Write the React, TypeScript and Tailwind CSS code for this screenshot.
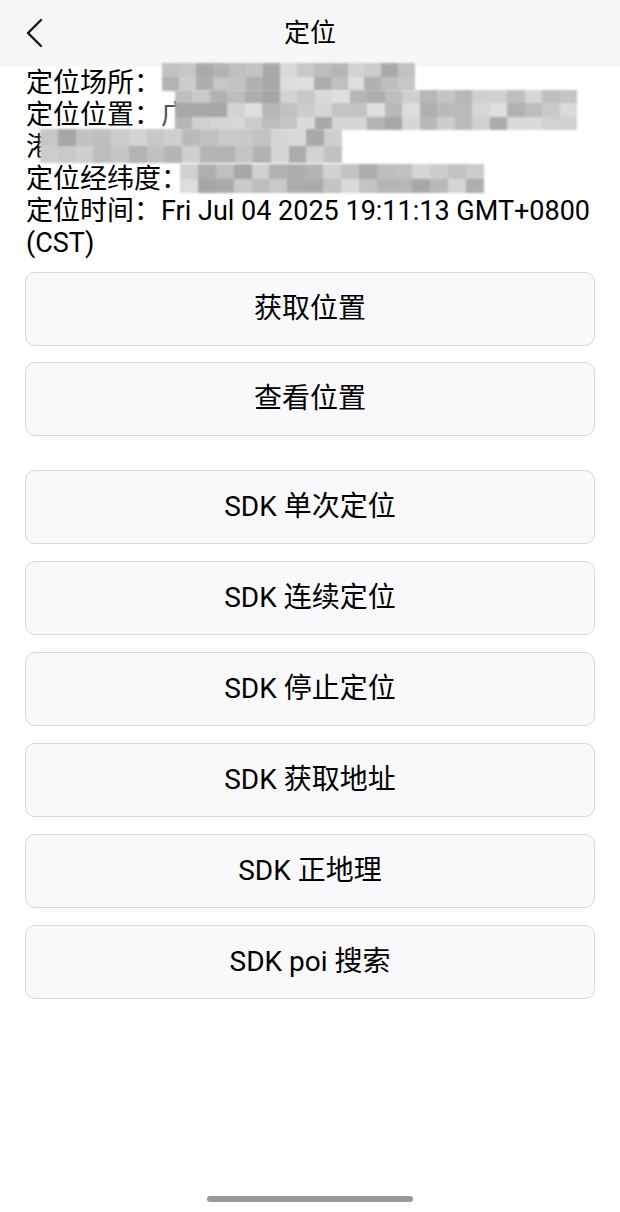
import { type ReactNode } from 'react';

const FONT = 'font-["Roboto","Noto_Sans_CJK_SC",sans-serif]';

/** Blurred mosaic used to hide the private parts of the location info */
function Mosaic({ x, y, w, h, seed }: { x: number; y: number; w: number; h: number; seed: number }) {
  const size = 18;
  const cols = Math.ceil(w / size);
  const rows = Math.ceil(h / size);
  const cells: ReactNode[] = [];
  let s = seed;
  for (let r = 0; r < rows; r++) {
    for (let c = 0; c < cols; c++) {
      s = (s * 9301 + 49297) % 233280;
      const v = 165 + Math.floor((s / 233280) * 60);
      cells.push(
        <div key={`${r}-${c}`} style={{ background: `rgb(${v},${v},${v})` }} />
      );
    }
  }
  return (
    <div
      className="absolute blur-[1px] grid rounded-[6px]"
      style={{
        left: x,
        top: y,
        width: w,
        height: h,
        gridTemplateColumns: `repeat(${cols}, 1fr)`,
        gridTemplateRows: `repeat(${rows}, 1fr)`,
      }}
    >
      {cells}
    </div>
  );
}

function ActionButton({ label }: { label: string }) {
  return (
    <button className="w-full h-[74px] rounded-[10px] border border-[#d8d8d8] bg-[#f9f8fa] text-[28px] text-black flex items-center justify-center">
      {label}
    </button>
  );
}

export default function App() {
  return (
    <div className={`w-[620px] h-[1212px] bg-white relative overflow-hidden text-black ${FONT}`}>
      {/* header */}
      <div className="h-[67px] bg-[#f7f7f9] flex items-center justify-center relative">
        <svg
          className="absolute left-[24px] top-[18px]"
          width="22"
          height="30"
          viewBox="0 0 22 30"
          fill="none"
          stroke="#111"
          strokeWidth="2.4"
          strokeLinecap="round"
          strokeLinejoin="round"
        >
          <path d="M17 2 L4 15 L17 28" />
        </svg>
        <span className="text-[26px]">定位</span>
      </div>

      {/* location info */}
      <div className="relative px-[26px] text-[27px] leading-[32px]">
        <div>定位场所：</div>
        <div>定位位置：<span className="text-[#555]">广</span></div>
        <div>港</div>
        <div>定位经纬度：</div>
        <div>定位时间：Fri Jul 04 2025 19:11:13 GMT+0800 (CST)</div>

        <Mosaic x={162} y={-4} w={253} h={28} seed={7} />
        <Mosaic x={175} y={23} w={402} h={40} seed={31} />
        <Mosaic x={40} y={62} w={302} h={34} seed={59} />
        <Mosaic x={180} y={97} w={304} h={29} seed={113} />
      </div>

      {/* actions */}
      <div className="px-[25px] mt-[13px] flex flex-col gap-[16px]">
        <ActionButton label="获取位置" />
        <ActionButton label="查看位置" />
      </div>
      <div className="px-[25px] mt-[34px] flex flex-col gap-[17px]">
        <ActionButton label="SDK 单次定位" />
        <ActionButton label="SDK 连续定位" />
        <ActionButton label="SDK 停止定位" />
        <ActionButton label="SDK 获取地址" />
        <ActionButton label="SDK 正地理" />
        <ActionButton label="SDK poi 搜索" />
      </div>

      {/* home indicator */}
      <div className="absolute left-[207px] bottom-[10px] w-[206px] h-[6px] rounded-full bg-[#9a9a9a]" />
    </div>
  );
}
